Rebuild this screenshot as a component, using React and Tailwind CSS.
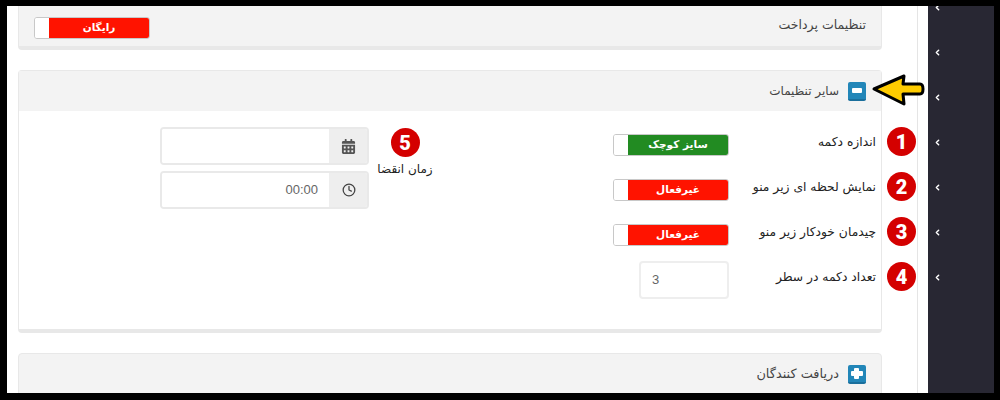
import React from "react";
import { ChevronLeft, Clock } from "lucide-react";
import { FaCalendarAlt } from "react-icons/fa";

const rows = ["اندازه دکمه", "نمایش لحظه ای زیر منو", "چیدمان خودکار زیر منو", "تعداد دکمه در سطر"];

function Toggle({ label, color }) {
  return (
    <div className="flex h-[22px] w-[116px] overflow-hidden rounded-[3px] border border-[#c8c8c8] bg-white">
      <div className="w-[14px] shrink-0 bg-white" />
      <div className={`flex flex-1 items-center justify-center text-[10.5px] font-bold text-white ${color}`} dir="rtl">
        {label}
      </div>
    </div>
  );
}

function Badge({ n, className }) {
  return (
    <div className={`flex h-[29px] w-[29px] items-center justify-center rounded-full bg-[#d40000] font-['Roboto',sans-serif] text-[20px] font-black text-white ${className}`}>
      {n}
    </div>
  );
}

function SquareIcon({ plus }) {
  return (
    <div className="relative h-[19px] w-[18px] rounded-[2px] border-b-2 border-[#1a6f9c] bg-[#2286b8]">
      {plus ? (
        <>
          <div className="absolute left-[3px] top-[6px] h-[5px] w-[12px] rounded-[1px] bg-white" />
          <div className="absolute left-[6px] top-[3px] h-[11px] w-[5px] rounded-[1px] bg-white" />
        </>
      ) : (
        <div className="absolute left-[4px] top-[6px] h-[5px] w-[10px] rounded-[1px] bg-white" />
      )}
    </div>
  );
}

function Arrow() {
  return (
    <svg className="absolute left-[852px] top-[2px]" width="54" height="34" viewBox="0 0 54 34">
      <path
        d="M3 16 L33 3 L32 11 L49 11 Q52 11 52 16 Q52 21 49 21 L32 21 L33 31 Z"
        fill="#ffcc00"
        stroke="#000"
        strokeWidth="3"
        strokeLinejoin="round"
      />
    </svg>
  );
}

export default function App() {
  return (
    <div className="h-[400px] w-[1000px] overflow-hidden bg-black pl-[7px] pt-[6px] font-['DejaVu_Sans',sans-serif]">
      <div className="flex h-[387px] w-[987px] overflow-hidden bg-white">
        <div className="w-[921px] bg-white">
          <div className="flex h-full w-[911px] flex-col border-r border-[#e5e5e5] pl-[11px]">
            {/* payment panel */}
            <div className="flex h-[44px] w-[864px] shrink-0 items-start justify-between rounded-b-[4px] border-x border-b-4 border-[#e8e8e8] bg-[#f3f3f3] px-[15px]">
              <div className="mt-[11px]">
                <Toggle label="رایگان" color="bg-[#ff1300]" />
              </div>
              <span className="mt-[10px] text-[12.5px] text-[#444]" dir="rtl">تنظیمات پرداخت</span>
            </div>

            {/* other settings */}
            <div className="relative mt-[20px] h-[263px] w-[864px] shrink-0 rounded-[4px] border-x border-t border-b-4 border-[#e8e8e8] bg-white">
              <div className="flex h-[40px] items-center justify-end gap-[9px] bg-[#f3f3f3] pr-[15px]">
                <span className="text-[12px] text-[#444]" dir="rtl">سایر تنظیمات</span>
                <SquareIcon />
              </div>
              <Arrow />
              <div className="flex">
                <div className="ml-[141px] mt-[16px] flex w-[209px] flex-col gap-[6px]">
                  <div className="flex h-[38px] overflow-hidden rounded-[4px] border-2 border-[#e9e9e9]">
                    <div className="flex-1 bg-white" />
                    <div className="flex w-[38px] items-center justify-center bg-[#eeeeee] pl-[1px] text-[#555]">
                      <FaCalendarAlt size={15} />
                    </div>
                  </div>
                  <div className="flex h-[38px] overflow-hidden rounded-[4px] border-2 border-[#e9e9e9]">
                    <div className="flex flex-1 items-center justify-end bg-white pr-[11px] font-['Liberation_Sans',sans-serif] text-[13px] text-[#666]">
                      00:00
                    </div>
                    <div className="flex w-[38px] items-center justify-center bg-[#eeeeee] pl-[1px] text-[#444]">
                      <Clock size={14} strokeWidth={2.2} />
                    </div>
                  </div>
                </div>
                <div className="ml-[9px] mt-[17px] flex w-[54px] flex-col items-center">
                  <Badge n="5" />
                  <span className="mt-[3px] whitespace-nowrap text-[12px] text-[#222]" dir="rtl">زمان انقضا</span>
                </div>
                <div className="ml-auto flex w-[268px] flex-col pr-[5px] pt-[9px]">
                  {rows.map((label, i) => (
                    <div key={label} className="relative flex h-[45px] items-center justify-between">
                      <div className="mt-[5px] flex w-[116px] justify-end">
                        {i < 3 ? (
                          <Toggle
                            label={i === 0 ? "سایز کوچک" : "غیرفعال"}
                            color={i === 0 ? "bg-[#228b22]" : "bg-[#ff1300]"}
                          />
                        ) : (
                          <div className="flex h-[38px] w-[90px] items-center rounded-[4px] border-2 border-[#eeeeee] pl-[11px] font-['Liberation_Sans',sans-serif] text-[13px] text-[#666]">
                            3
                          </div>
                        )}
                      </div>
                      <span className="whitespace-nowrap text-[12.3px] text-[#222]" dir="rtl">{label}</span>
                      <Badge n={i + 1} className="absolute left-[274px] top-[7px]" />
                    </div>
                  ))}
                </div>
              </div>
            </div>

            {/* receivers */}
            <div className="mt-[20px] flex h-[60px] w-[864px] shrink-0 items-start justify-end gap-[9px] rounded-[4px] border border-[#e8e8e8] bg-[#f3f3f3] pr-[15px] pt-[11px]">
              <span className="-mt-[1px] text-[12.9px] text-[#444]" dir="rtl">دریافت کنندگان</span>
              <SquareIcon plus />
            </div>
          </div>
        </div>

        {/* sidebar */}
        <div className="flex h-full w-[66px] flex-col bg-[#282733] pl-[5px] text-white">
          {[0, 1, 2, 3, 4, 5, 6].map((i) => (
            <div key={i} className={`flex h-[45px] items-center ${i === 0 ? "-mt-[21px]" : ""}`}>
              <ChevronLeft size={9} strokeWidth={4} />
            </div>
          ))}
        </div>
      </div>
    </div>
  );
}
